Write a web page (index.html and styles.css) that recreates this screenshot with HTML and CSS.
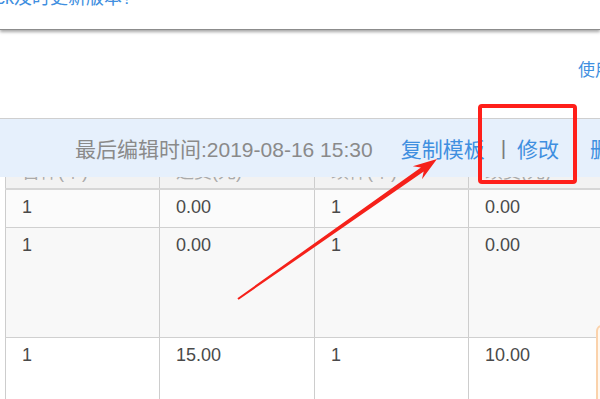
FILE: index.html
```html
<!DOCTYPE html>
<html lang="zh-CN">
<head>
    <meta charset="UTF-8">
    <title>运费模板</title>
    <link rel="stylesheet" href="styles.css">
</head>
<body>
    <div class="notice">
        <p>ck及时更新版本?</p>
    </div>

    <div class="help">使用说明</div>

    <div class="bar">
        <span class="time">最后编辑时间:2019-08-16 15:30</span>
        <a class="link copy">复制模板</a>
        <span class="sep">|</span>
        <a class="link">修改</a>
        <a class="link del">删除</a>
    </div>

    <table class="rates">
        <colgroup>
            <col class="c1"><col class="c2"><col class="c3"><col class="c4">
        </colgroup>
        <tr class="head">
            <th><div><span>首件(个)</span></div></th>
            <th><div><span>运费(元)</span></div></th>
            <th><div><span>续件(个)</span></div></th>
            <th><div><span>续费(元)</span></div></th>
        </tr>
        <tr class="r1">
            <td>1</td><td>0.00</td><td>1</td><td>0.00</td>
        </tr>
        <tr class="r2">
            <td>1</td><td>0.00</td><td>1</td><td>0.00</td>
        </tr>
        <tr class="r3">
            <td>1</td><td>15.00</td><td>1</td><td>10.00</td>
        </tr>
    </table>

    <!-- Markierungen aus dem Screenshot -->
    <div class="mark"></div>
    <svg class="arrow" width="600" height="399" viewBox="0 0 600 399">
        <polygon fill="#f5211a" points="237.4,298.2 420.9,167.4 412.8,166.3 437,159 422,179.3 423.7,171.4 238.6,299.8"/>
    </svg>
    <div class="side"></div>
</body>
</html>
```

FILE: styles.css
```css
* {
    box-sizing: border-box;
}

body {
    margin: 0;
    width: 600px;
    height: 399px;
    overflow: hidden;
    position: relative;
    background-color: #fff;
    font-family: "Liberation Sans", Arial, "Noto Sans CJK SC", sans-serif;
    color: #4a4a4a;
}

.notice {
    height: 30px;
    overflow: hidden;
    border-bottom: 1px solid #8c8c8c;
    box-shadow: 0 2px 3px rgba(0, 0, 0, 0.35);
    position: relative;
}

.notice p {
    margin: -12px 0 0 -4px;
    font-size: 18px;
    line-height: 20px;
    color: #3f8fe0;
    white-space: nowrap;
}

.help {
    height: 88px;
    padding-top: 31px;
    padding-left: 578px;
    font-size: 17px;
    line-height: 20px;
    color: #3f8fe0;
    white-space: nowrap;
    overflow: hidden;
}

.bar {
    display: flex;
    align-items: center;
    height: 59px;
    padding-left: 75px;
    border-top: 1px solid #cfcfcf;
    background-color: #e6f0fc;
    font-size: 21px;
    white-space: nowrap;
    overflow: hidden;
    position: relative;
    z-index: 1;
}

.time {
    color: #8a8a8a;
}

.link {
    color: #3f8fe0;
}

.copy {
    margin-left: 28px;
}

.sep {
    color: #7a7a7a;
    margin: 0 11px 0 16px;
}

.del {
    margin-left: 31px;
}

.rates {
    margin-left: 5px;
    border-collapse: collapse;
    table-layout: fixed;
    width: 640px;
    font-size: 18px;
    line-height: 24px;
}

.c1 { width: 154px; }
.c2 { width: 155px; }
.c3 { width: 154px; }
.c4 { width: 177px; }

.rates th, .rates td {
    border-left: 1px solid #cdcdcd;
    text-align: left;
    vertical-align: top;
    padding: 0 16px;
}

.head th {
    background-color: #f2f2f2;
    border-bottom: 2px solid #d6d6d6;
    font-weight: normal;
    color: #aaa;
}

.head th div {
    height: 11px;
    overflow: hidden;
    line-height: 20px;
}

.head th span {
    display: block;
    margin-top: -15px;
}

.rates td {
    border-bottom: 1px solid #d0d0d0;
    padding-top: 5px;
}

.r1 td {
    background-color: #fbfbfb;
    padding-bottom: 8px;
}

.r2 td {
    background-color: #f8f8f8;
    padding-bottom: 80px;
}

.r3 td {
    background-color: #fff;
    padding-top: 5px;
    padding-bottom: 40px;
}

.mark {
    position: absolute;
    left: 478px;
    top: 104px;
    width: 99px;
    height: 80px;
    border: 4px solid #ff1f1a;
    border-radius: 4px;
    z-index: 2;
}

.arrow {
    position: absolute;
    left: 0;
    top: 0;
    z-index: 3;
}

.side {
    position: absolute;
    left: 596px;
    top: 325px;
    width: 20px;
    height: 100px;
    border: 2px solid #fbd2ab;
    border-radius: 6px;
    background-color: #fff8ef;
}
```
